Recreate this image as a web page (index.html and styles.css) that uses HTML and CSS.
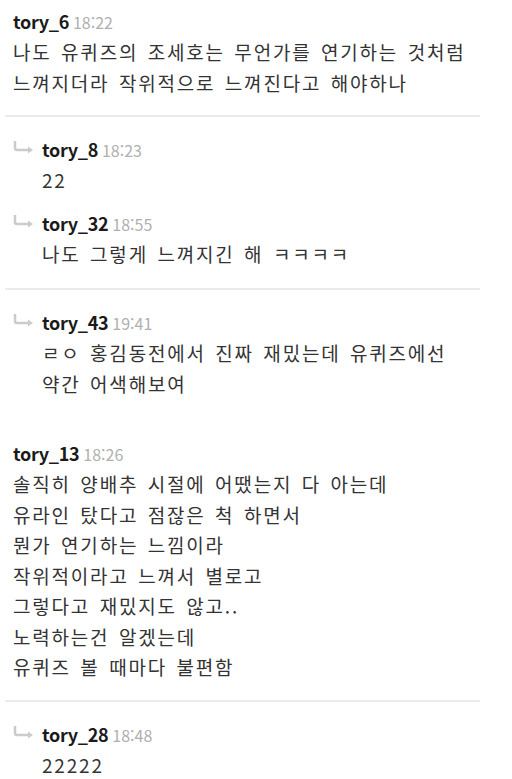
FILE: index.html
```html
<!DOCTYPE html>
<html lang="ko">
<head>
    <meta charset="UTF-8">
    <meta name="viewport" content="width=device-width, initial-scale=1.0">
    <title>댓글</title>
    <link rel="stylesheet" href="styles.css">
</head>
<body>

    <div class="list">

        <!-- 댓글 tory_6 -->
        <div class="comment">
            <div class="head"><span class="name">tory_6</span><span class="time">18:22</span></div>
            <p class="text">나도 유퀴즈의 조세호는 무언가를 연기하는 것처럼<br>느껴지더라 작위적으로 느껴진다고 해야하나</p>
        </div>

        <div class="replies">
            <div class="reply">
                <svg class="arrow" width="20" height="14" viewBox="0 0 20 14"><path d="M2 0 V7 Q2 9 4 9 H16" /><polygon points="15,5.5 20,9 15,12.5" /></svg>
                <div class="head"><span class="name">tory_8</span><span class="time">18:23</span></div>
                <p class="text">22</p>
            </div>
            <div class="reply">
                <svg class="arrow" width="20" height="14" viewBox="0 0 20 14"><path d="M2 0 V7 Q2 9 4 9 H16" /><polygon points="15,5.5 20,9 15,12.5" /></svg>
                <div class="head"><span class="name">tory_32</span><span class="time">18:55</span></div>
                <p class="text">나도 그렇게 느껴지긴 해 ㅋㅋㅋㅋ</p>
            </div>
        </div>

        <div class="replies">
            <div class="reply">
                <svg class="arrow" width="20" height="14" viewBox="0 0 20 14"><path d="M2 0 V7 Q2 9 4 9 H16" /><polygon points="15,5.5 20,9 15,12.5" /></svg>
                <div class="head"><span class="name">tory_43</span><span class="time">19:41</span></div>
                <p class="text">ㄹㅇ 홍김동전에서 진짜 재밌는데 유퀴즈에선<br>약간 어색해보여</p>
            </div>
        </div>

        <!-- 댓글 tory_13 -->
        <div class="comment">
            <div class="head"><span class="name">tory_13</span><span class="time">18:26</span></div>
            <p class="text">솔직히 양배추 시절에 어땠는지 다 아는데<br>유라인 탔다고 점잖은 척 하면서<br>뭔가 연기하는 느낌이라<br>작위적이라고 느껴서 별로고<br>그렇다고 재밌지도 않고..<br>노력하는건 알겠는데<br>유퀴즈 볼 때마다 불편함</p>
        </div>

        <div class="replies">
            <div class="reply">
                <svg class="arrow" width="20" height="14" viewBox="0 0 20 14"><path d="M2 0 V7 Q2 9 4 9 H16" /><polygon points="15,5.5 20,9 15,12.5" /></svg>
                <div class="head"><span class="name">tory_28</span><span class="time">18:48</span></div>
                <p class="text">22222</p>
            </div>
        </div>

    </div>

</body>
</html>
```

FILE: styles.css
```css
body {
    margin: 0;
    background: #fff;
    font-family: "Noto Sans CJK KR", "Noto Sans", sans-serif;
    color: #333;
}
.list {
    width: 475px;
    margin-left: 5px;
}
.comment {
    padding: 22px 0 17px 8px;
}
.comment:first-child {
    padding-top: 8px;
}
.replies {
    border-top: 2px solid #ebebeb;
    padding: 19px 0 19px 8px;
}
.reply {
    display: grid;
    grid-template-columns: 20px 1fr;
    column-gap: 9px;
    margin-bottom: 14px;
}
.reply:last-child {
    margin-bottom: 0;
}
.arrow {
    grid-column: 1;
    grid-row: 1;
    align-self: center;
    margin-top: -2px;
}
.arrow path {
    fill: none;
    stroke: #cbcbcb;
    stroke-width: 2.5;
}
.arrow polygon {
    fill: #cbcbcb;
}
.reply .head, .reply .text {
    grid-column: 2;
}
.head {
    line-height: 26px;
    height: 26px;
    white-space: nowrap;
}
.name {
    font-size: 18px;
    font-weight: bold;
    color: #1a1a1a;
    letter-spacing: -0.3px;
}
.time {
    font-size: 16px;
    color: #b0b0b0;
    margin-left: 4px;
}
.text {
    margin: 3px 0 0;
    font-size: 19px;
    line-height: 30.5px;
    letter-spacing: 1.8px;
    word-spacing: 2.4px;
    white-space: nowrap;
}
```
